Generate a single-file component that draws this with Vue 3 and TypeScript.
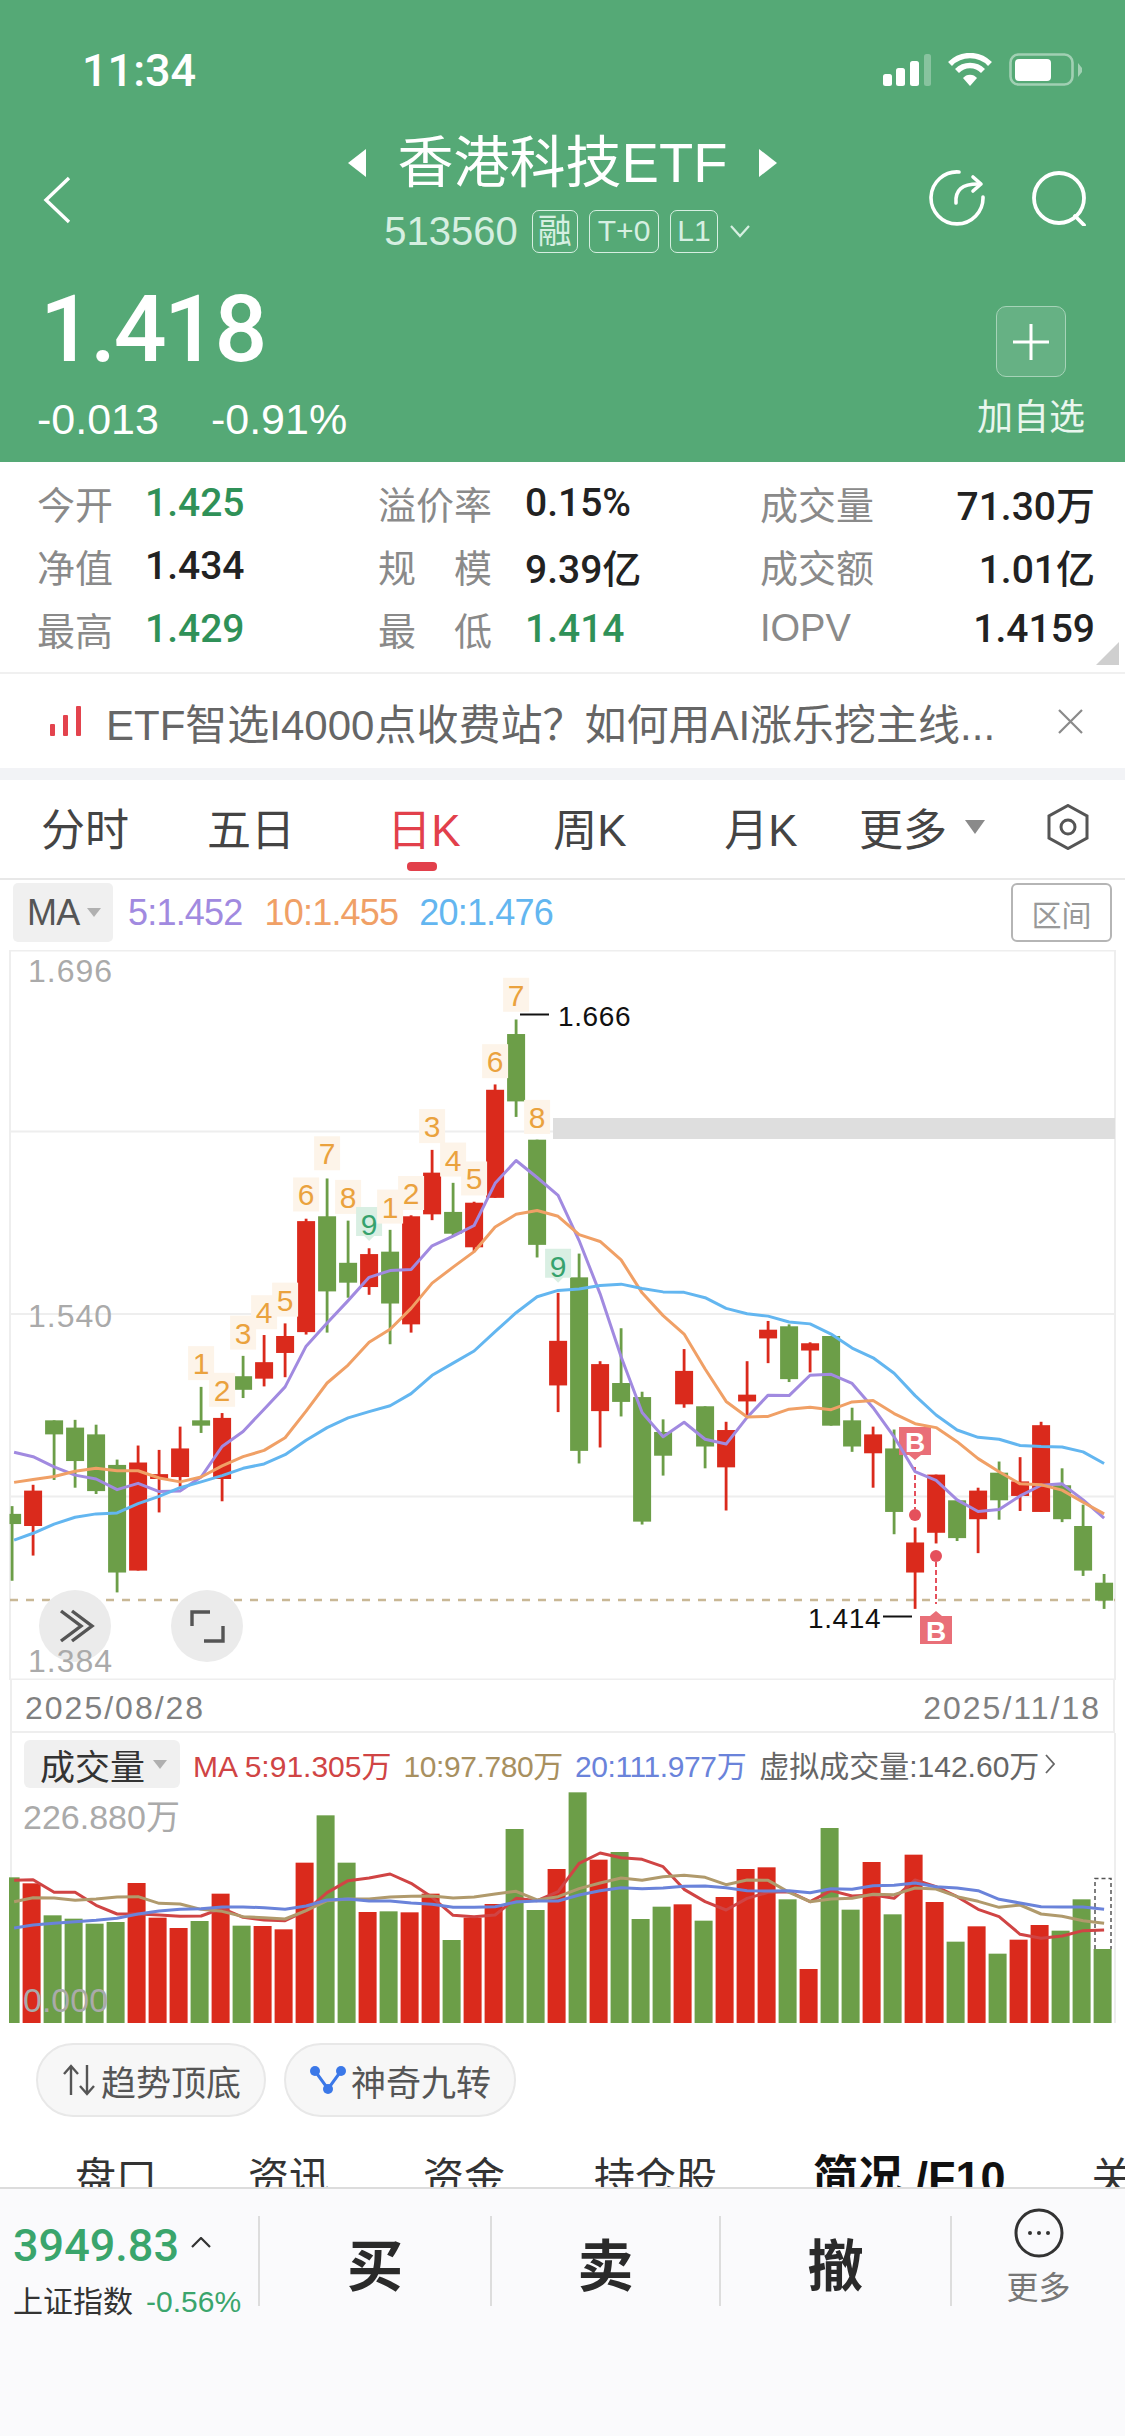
<template>
  <div class="page">
    <header class="top">
      <div class="status">
        <span class="clock">11:34</span>
        <div class="status-icons">
          <svg width="50" height="34" viewBox="0 0 50 34">
            <rect x="2" y="21" width="9" height="12" rx="2.5" fill="#fff" />
            <rect x="15" y="15" width="9" height="18" rx="2.5" fill="#fff" />
            <rect x="29" y="8" width="9" height="25" rx="2.5" fill="#fff" />
            <rect x="43" y="1" width="7" height="32" rx="2.5" fill="#fff" opacity="0.3" />
          </svg>
          <svg width="46" height="34" viewBox="0 0 46 34">
            <path d="M3 11 A28 28 0 0 1 43 11" fill="none" stroke="#fff" stroke-width="5.5" />
            <path d="M10 18 A18 18 0 0 1 36 18" fill="none" stroke="#fff" stroke-width="5.5" />
            <path d="M16 25 L23 33 L30 25 A9 9 0 0 0 16 25 Z" fill="#fff" />
          </svg>
          <svg width="73" height="34" viewBox="0 0 73 34">
            <rect x="1.5" y="1.5" width="62" height="30" rx="8" fill="none" stroke="#fff" stroke-width="2.6" opacity="0.45" />
            <rect x="6" y="6" width="36" height="22" rx="4" fill="#fff" />
            <path d="M69 10 L73 15 V19 L69 24 Z" fill="#fff" opacity="0.45" />
          </svg>
        </div>
      </div>

      <div class="nav">
        <svg class="back" width="28" height="48" viewBox="0 0 28 48">
          <path d="M26 2 L3 24 L26 46" fill="none" stroke="#fff" stroke-width="3.4" />
        </svg>
        <div class="stock">
          <div class="stock-name">
            <svg width="18" height="28" viewBox="0 0 18 28"><path d="M18 0 V28 L0 14 Z" fill="#fff" /></svg>
            <span>香港科技ETF</span>
            <svg width="18" height="28" viewBox="0 0 18 28"><path d="M0 0 V28 L18 14 Z" fill="#fff" /></svg>
          </div>
          <div class="stock-code">
            <span class="code">513560</span>
            <span class="badge rong">融</span>
            <span class="badge wide">T+0</span>
            <span class="badge">L1</span>
            <svg class="code-more" width="20" height="13" viewBox="0 0 20 13">
              <path d="M1 1 L10 11 L19 1" fill="none" stroke="#d6efe1" stroke-width="2.2" />
            </svg>
          </div>
        </div>
        <div class="nav-actions">
          <svg width="56" height="56" viewBox="0 0 56 56" fill="none" stroke="#fff" stroke-width="3.6" stroke-linecap="round" stroke-linejoin="round">
            <path d="M30 2 A26 26 0 1 0 54 27" />
            <path d="M27 33 C26 20 33 14 49 14" />
            <path d="M44 7 L52 14 L44 21" />
          </svg>
          <svg width="56" height="56" viewBox="0 0 56 56" fill="none" stroke="#fff" stroke-width="3.8" stroke-linecap="round">
            <circle cx="28" cy="28" r="25" />
            <path d="M44 46 L53 55" />
          </svg>
        </div>
      </div>

      <div class="quote">
        <div>
          <div class="price">1.418</div>
          <div class="change"><span>-0.013</span><span>-0.91%</span></div>
        </div>
        <div class="watch">
          <div class="watch-btn">
            <svg width="38" height="38" viewBox="0 0 38 38">
              <path d="M19 1 V37 M1 19 H37" stroke="#fff" stroke-width="3" />
            </svg>
          </div>
          <span>加自选</span>
        </div>
      </div>
    </header>

    <section class="stats">
      <div v-for="(cell, i) in stats" :key="i" class="stat" :class="`col-${i % 3}`">
        <span class="stat-label">{{ cell.label }}</span>
        <span class="stat-value" :class="{ green: cell.green }">{{ cell.value }}</span>
      </div>
      <span class="corner"></span>
    </section>

    <section class="news">
      <svg width="32" height="30" viewBox="0 0 32 30">
        <rect x="0" y="18" width="5" height="12" rx="1" fill="#e3434d" />
        <rect x="13" y="9" width="5" height="21" rx="1" fill="#e3434d" />
        <rect x="26" y="0" width="5" height="30" rx="1" fill="#e3434d" />
      </svg>
      <span class="news-text">ETF智选I4000点收费站？如何用AI涨乐挖主线...</span>
      <svg width="25" height="25" viewBox="0 0 25 25">
        <path d="M1 1 L24 24 M24 1 L1 24" stroke="#8a8a8a" stroke-width="2.2" />
      </svg>
    </section>

    <nav class="tabs">
      <span v-for="tab in tabs" :key="tab" class="tab" :class="{ active: tab === '日K' }">{{ tab }}</span>
      <span class="tab-more">更多<i class="caret"></i></span>
      <svg class="hex" width="44" height="46" viewBox="0 0 44 46">
        <path d="M22 1.5 L41 12 V34 L22 44.5 L3 34 V12 Z" fill="none" stroke="#555" stroke-width="3" />
        <circle cx="22" cy="23" r="7" fill="none" stroke="#555" stroke-width="3" />
      </svg>
    </nav>

    <div class="ma-row">
      <span class="ma-chip">MA<i class="caret small"></i></span>
      <span class="ma5">5:1.452</span>
      <span class="ma10">10:1.455</span>
      <span class="ma20">20:1.476</span>
      <span class="range-btn">区间</span>
    </div>

    <div class="kline">
      <svg width="1125" height="730" viewBox="0 950 1125 730">
        <path d="M10 950 V1680 M1115 950 V1680 M10 950.5 H1115 M10 1131.5 H1115 M10 1314 H1115 M10 1496.5 H1115 M10 1679.5 H1115" stroke="#eeeeee" stroke-width="2" fill="none" />
        <rect x="553" y="1118" width="562" height="21" fill="#dedede" />
        <path d="M10 1600 H1115" stroke="#c9b896" stroke-width="2.4" stroke-dasharray="8 8" />

        <g v-for="(c, i) in candles" :key="i" :fill="c[0] ? RED : GREEN">
          <rect :x="kX(i) - 1.4" :y="kY(c[3])" width="2.8" :height="kY(c[4]) - kY(c[3])" />
          <rect :x="Math.max(kX(i) - 9, 9.5)" :y="kY(c[1])" :width="kX(i) + 9 - Math.max(kX(i) - 9, 9.5)" :height="kY(c[2]) - kY(c[1])" />
        </g>

        <g v-for="(t, i) in tags" :key="`t${i}`">
          <template v-if="t[0] === 9">
            <path :d="nineShape(kX(t[1]), kY(t[2]))" fill="#d9efe3" />
            <text :x="kX(t[1])" :y="kY(t[2]) + 11" class="tag nine">9</text>
          </template>
          <template v-else>
            <rect :x="kX(t[1]) - 13" :y="kY(t[2]) - 17" width="26" height="34" fill="#fdf4e9" />
            <text :x="kX(t[1])" :y="kY(t[2]) + 11" class="tag">{{ t[0] }}</text>
          </template>
        </g>

        <path d="M899 1427 H931 V1455 H921 L915 1460 L909 1455 H899 Z" fill="#e96f78" />
        <text x="915" y="1452" class="buy">B</text>
        <path d="M915 1467 V1509" stroke="#e5505c" stroke-width="2" stroke-dasharray="5 3" />
        <circle cx="915" cy="1515" r="6" fill="#e5505c" />
        <path d="M936 1562 V1604" stroke="#e5505c" stroke-width="2" stroke-dasharray="5 3" />
        <circle cx="936" cy="1556" r="6" fill="#e5505c" />
        <path d="M920 1616 H930 L936 1611 L942 1616 H952 V1644 H920 Z" fill="#e96f78" />
        <text x="936" y="1641" class="buy">B</text>

        <path :d="linePath(ma5, kX, kY)" class="line" stroke="#a18ae0" />
        <path :d="linePath(ma10, kX, kY)" class="line" stroke="#f0a066" />
        <path :d="linePath(ma20, kX, kY)" class="line" stroke="#63b6f0" />

        <path d="M520 1014.5 H549" stroke="#111" stroke-width="2" />
        <text x="558" y="1026" class="peak">1.666</text>
        <path d="M883 1616.5 H912" stroke="#111" stroke-width="2" />
        <text x="808" y="1628" class="peak">1.414</text>

        <circle cx="75" cy="1626" r="36" fill="#ebebeb" />
        <path d="M61 1611 L81 1626 L61 1641 M72 1611 L92 1626 L72 1641" fill="none" stroke="#555" stroke-width="3.4" />
        <circle cx="207" cy="1626" r="36" fill="#ebebeb" />
        <path d="M192 1626 V1612 H210 M223 1626 V1641 H204" fill="none" stroke="#555" stroke-width="3.4" />

        <text x="28" y="982" class="axis">1.696</text>
        <text x="28" y="1327" class="axis">1.540</text>
        <text x="28" y="1672" class="axis">1.384</text>
      </svg>
    </div>

    <div class="dates"><span>2025/08/28</span><span>2025/11/18</span></div>

    <div class="vol-panel">
      <div class="vol-legend">
        <span class="vol-chip">成交量<i class="caret small"></i></span>
        <span class="vol-ma vm5">MA 5:91.305万</span>
        <span class="vol-ma vm10">10:97.780万</span>
        <span class="vol-ma vm20">20:111.977万</span>
        <span class="vol-virtual">虚拟成交量:142.60万</span>
        <svg width="10" height="20" viewBox="0 0 10 20">
          <path d="M1 1 L9 10 L1 19" fill="none" stroke="#666" stroke-width="1.8" />
        </svg>
      </div>
      <svg class="vol-chart" width="1125" height="233" viewBox="0 1790 1125 233">
        <rect v-for="(b, i) in volumes" :key="i"
          :x="Math.max(vX(i) - 9, 9)" :y="vY(b[1])"
          :width="vX(i) + 9 - Math.max(vX(i) - 9, 9)" :height="2023 - vY(b[1])"
          :fill="b[0] ? RED : GREEN" />
        <path d="M1095 1949 V1878.5 H1111 V1949" fill="none" stroke="#555" stroke-width="1.5" stroke-dasharray="4 3" />
        <path :d="linePath(volMa5, kX, vY)" class="line" stroke="#d04444" />
        <path :d="linePath(volMa10, kX, vY)" class="line" stroke="#b09a6c" />
        <path :d="linePath(volMa20, kX, vY)" class="line" stroke="#6a83da" />
        <text x="23" y="1829" class="axis big">226.880万</text>
        <text x="23" y="2012" class="axis big">0.000</text>
      </svg>
    </div>

    <div class="extras">
      <div class="pills">
        <span class="pill">
          <svg width="34" height="32" viewBox="0 0 34 32">
            <path d="M9 31 V3 M2 10 L9 2 L16 10 M25 1 V29 M18 22 L25 30 L32 22" fill="none" stroke="#555" stroke-width="2.4" />
          </svg>
          趋势顶底
        </span>
        <span class="pill">
          <svg width="36" height="30" viewBox="0 0 36 30">
            <path d="M5 6 L18 24 L31 6" fill="none" stroke="#3b78e8" stroke-width="3" />
            <circle cx="5" cy="6" r="5" fill="#3b78e8" />
            <circle cx="31" cy="6" r="5" fill="#3b78e8" />
            <circle cx="18" cy="24" r="5" fill="#3b78e8" />
          </svg>
          神奇九转
        </span>
      </div>
      <div class="sections">
        <span style="margin-left: 75px">盘口</span>
        <span style="margin-left: 91px">资讯</span>
        <span style="margin-left: 93px">资金</span>
        <span style="margin-left: 89px">持仓股</span>
        <span class="current" style="margin-left: 96px">简况 /F10</span>
        <span style="margin-left: 86px">关联</span>
      </div>
    </div>

    <footer class="footer">
      <div class="index">
        <div class="index-top">
          <span class="index-value">3949.83</span>
          <svg width="20" height="11" viewBox="0 0 20 11">
            <path d="M1 10 L10 1 L19 10" fill="none" stroke="#333" stroke-width="2.2" />
          </svg>
        </div>
        <div class="index-bottom"><span>上证指数</span><span class="index-pct">-0.56%</span></div>
      </div>
      <div class="trade">买</div>
      <div class="trade">卖</div>
      <div class="trade">撤</div>
      <div class="more">
        <svg width="50" height="50" viewBox="0 0 50 50">
          <circle cx="25" cy="25" r="23" fill="none" stroke="#333" stroke-width="3" />
          <circle cx="16" cy="25" r="2" fill="#333" />
          <circle cx="25" cy="25" r="2" fill="#333" />
          <circle cx="34" cy="25" r="2" fill="#333" />
        </svg>
        <span>更多</span>
      </div>
    </footer>
  </div>
</template>

<script setup lang="ts">
type Candle = [number, number, number, number, number]

const RED = '#da2a1c'
const GREEN = '#6c9e48'

const stats = [
  { label: '今开', value: '1.425', green: true },
  { label: '溢价率', value: '0.15%' },
  { label: '成交量', value: '71.30万' },
  { label: '净值', value: '1.434' },
  { label: '规 模', value: '9.39亿' },
  { label: '成交额', value: '1.01亿' },
  { label: '最高', value: '1.429', green: true },
  { label: '最 低', value: '1.414', green: true },
  { label: 'IOPV', value: '1.4159' }
]

const tabs = ['分时', '五日', '日K', '周K', '月K']

const kX = (i: number) => 12.1 + 21 * i
const kY = (v: number) => 940 + (v * 760) / 1568
const vX = (i: number) => 10.6 + 21 * i
const vY = (v: number) => 1700 + v / 3

// up, body top, body bottom, wick top, wick bottom
const candles: Candle[] = [
  [0, 1184, 1205, 1168, 1322], [1, 1136, 1209, 1124, 1270], [0, 991, 1020, 991, 1114],
  [0, 1006, 1075, 990, 1130], [0, 1020, 1137, 1000, 1143], [0, 1083, 1305, 1072, 1346],
  [1, 1078, 1301, 1043, 1301], [1, 1102, 1112, 1052, 1181], [1, 1049, 1108, 1004, 1128],
  [0, 991, 1002, 922, 1017], [1, 986, 1112, 976, 1158], [0, 900, 928, 858, 945],
  [1, 871, 905, 815, 921], [1, 817, 852, 791, 902], [1, 580, 809, 575, 814],
  [0, 570, 725, 492, 810], [0, 666, 707, 579, 738], [1, 648, 716, 636, 732],
  [0, 643, 750, 598, 834], [1, 570, 793, 568, 810], [1, 480, 566, 433, 578],
  [0, 561, 606, 501, 612], [1, 542, 634, 540, 642], [1, 309, 532, 298, 532],
  [0, 194, 333, 164, 365], [0, 412, 629, 412, 655], [1, 827, 919, 728, 974],
  [0, 696, 1054, 647, 1080], [1, 875, 972, 869, 1047], [0, 914, 953, 801, 983],
  [0, 943, 1200, 932, 1206], [0, 1015, 1064, 989, 1105], [1, 889, 958, 844, 965],
  [0, 962, 1045, 962, 1090], [1, 1011, 1088, 994, 1177], [1, 938, 952, 869, 980],
  [1, 804, 822, 786, 873], [0, 797, 906, 793, 912], [1, 832, 847, 830, 892],
  [0, 817, 1002, 817, 1002], [0, 991, 1045, 965, 1056], [1, 1020, 1059, 1004, 1130],
  [0, 1049, 1180, 1010, 1226], [1, 1243, 1305, 1212, 1380], [1, 1103, 1223, 1103, 1245],
  [0, 1156, 1234, 1156, 1240], [1, 1136, 1195, 1130, 1265], [0, 1099, 1156, 1076, 1196],
  [1, 1117, 1147, 1067, 1178], [1, 1001, 1180, 994, 1180], [0, 1125, 1195, 1090, 1201],
  [0, 1209, 1301, 1165, 1312], [0, 1326, 1363, 1308, 1380]
]

const ma5 = [
  1057, 1066, 1087, 1104, 1112, 1134, 1121, 1138, 1137, 1108, 1045, 1014, 968, 922, 838, 790, 744, 696, 682, 680,
  631, 611, 589, 502, 455, 490, 527, 620, 730, 860, 975, 1025, 995, 1030, 1040, 985, 939, 940, 898, 896, 915, 965,
  1025, 1097, 1115, 1155, 1179, 1175, 1147, 1125, 1122, 1155, 1193
]
const ma10 = [
  1119, 1113, 1107, 1096, 1090, 1095, 1095, 1110, 1118, 1108, 1085, 1066, 1053, 1027, 972, 914, 877, 830, 803, 760,
  708, 675, 643, 592, 566, 558, 570, 608, 622, 660, 728, 775, 813, 885, 952, 984, 983, 968, 964, 969, 953, 950,
  977, 998, 1006, 1035, 1070, 1097, 1122, 1124, 1135, 1160, 1184
]
const ma20 = [
  1238, 1224, 1205, 1191, 1184, 1182, 1163, 1148, 1130, 1118, 1105, 1090, 1081, 1062, 1032, 1006, 986, 973, 961, 936,
  898, 873, 848, 808, 769, 736, 723, 720, 713, 710, 719, 726, 727, 738, 760, 771, 776, 788, 792, 813, 842, 862,
  894, 940, 980, 1011, 1026, 1030, 1043, 1045, 1046, 1056, 1080
]

// value, candle index, centre
const tags: [number, number, number][] = [
  [1, 9, 873], [2, 10, 928], [3, 11, 810], [4, 12, 768], [5, 13, 742], [6, 14, 525], [7, 15, 440], [8, 16, 530],
  [9, 17, 586], [1, 18, 550], [2, 19, 522], [3, 20, 384], [4, 21, 453], [5, 22, 492], [6, 23, 250], [7, 24, 113],
  [8, 25, 365], [9, 26, 672]
]

const volTops = [
  532, 550, 646, 656, 671, 666, 549, 653, 684, 663, 581, 677, 678, 688, 488, 346, 488, 636, 634, 637, 581, 720, 653,
  612, 387, 630, 507, 277, 479, 456, 657, 620, 613, 662, 591, 507, 502, 598, 807, 384, 629, 486, 643, 464, 606, 725,
  679, 761, 719, 675, 692, 598, 747
]
const volumes = volTops.map((top, i): [boolean, number] => [candles[i][0] === 1, top])

const volMa5 = [
  541, 539, 577, 577, 616, 642, 642, 645, 649, 648, 625, 652, 660, 662, 632, 578, 542, 534, 522, 550, 592, 646, 650,
  645, 595, 602, 575, 490, 459, 473, 478, 500, 568, 605, 630, 595, 577, 575, 605, 572, 588, 585, 595, 540, 560, 590,
  628, 650, 703, 715, 708, 692, 690
]
const volMa10 = [
  605, 593, 594, 601, 597, 591, 590, 610, 612, 628, 634, 650, 653, 657, 632, 602, 597, 597, 591, 589, 588, 594, 591,
  582, 574, 600, 590, 566, 549, 534, 541, 530, 526, 532, 554, 540, 541, 577, 605, 597, 595, 583, 584, 564, 567, 590,
  604, 622, 615, 642, 649, 662, 670
]
const volMa20 = [
  684, 675, 670, 665, 661, 655, 642, 633, 628, 626, 621, 621, 623, 628, 618, 600, 597, 603, 603, 609, 613, 622, 622,
  620, 606, 603, 603, 585, 572, 563, 566, 564, 559, 558, 563, 572, 573, 572, 578, 566, 568, 557, 556, 549, 560, 564,
  572, 598, 609, 620, 621, 621, 628
]

function linePath(values: number[], toX: (i: number) => number, toY: (v: number) => number) {
  return values.map((v, i) => `${i ? 'L' : 'M'}${toX(i) + (i ? 0 : 2)} ${toY(v)}`).join(' ')
}

function nineShape(x: number, y: number) {
  return `M${x - 13} ${y - 17} H${x + 13} V${y + 12} H${x + 5} L${x} ${y + 17} L${x - 5} ${y + 12} H${x - 13} Z`
}
</script>

<style>
html,
body {
  margin: 0;
  background: #fff;
}
</style>

<style scoped>
.page {
  width: 1125px;
  height: 2436px;
  overflow: hidden;
  display: flex;
  flex-direction: column;
  background: #fff;
  font-family: 'Liberation Sans', 'Noto Sans CJK SC', sans-serif;
  color: #333;
}

.top {
  height: 462px;
  flex: none;
  background: #55a976;
  color: #fff;
  box-sizing: border-box;
  padding-top: 46px;
}

.status {
  height: 48px;
  display: flex;
  align-items: center;
  justify-content: space-between;
  padding: 0 43px 0 82px;
}

.clock {
  font-size: 45px;
  font-weight: 500;
  font-family: Roboto, 'Liberation Sans', sans-serif;
}

.status-icons {
  display: flex;
  align-items: center;
  gap: 16px;
}

.nav {
  margin-top: 41px;
  display: grid;
  grid-template-columns: 1fr auto 1fr;
  height: 118px;
}

.back {
  margin: 41px 0 0 43px;
}

.stock {
  display: flex;
  flex-direction: column;
  align-items: center;
}

.stock-name {
  display: flex;
  align-items: center;
  gap: 32px;
  height: 56px;
  font-size: 56px;
  line-height: 56px;
}

.stock-code {
  margin-top: 17px;
  padding-left: 9px;
  display: flex;
  align-items: center;
  gap: 11px;
  color: #d6efe1;
  height: 46px;
}

.code {
  font-size: 40px;
  margin-right: 3px;
}

.badge {
  border: 1.5px solid #d6efe1;
  border-radius: 7px;
  height: 43px;
  box-sizing: border-box;
  padding: 0 6px;
  display: flex;
  align-items: center;
  font-size: 30px;
  line-height: 1;
}

.badge.wide {
  padding: 0 8px;
}

.rong {
  padding: 0 5px;
  font-size: 34px;
}

.code-more {
  margin-left: 1px;
}

.nav-actions {
  display: flex;
  justify-content: flex-end;
  align-items: flex-start;
  gap: 46px;
  padding: 35px 38px 0 0;
}

.quote {
  margin-top: 43px;
  display: flex;
  justify-content: space-between;
  padding: 0 40px 0 37px;
}

.price {
  font-size: 93px;
  line-height: 67px;
  height: 67px;
  padding: 0 0 0 3px;
  font-weight: 500;
  letter-spacing: -2.5px;
  font-family: Roboto, 'Liberation Sans', sans-serif;
}

.change {
  margin-top: 36px;
  display: flex;
  gap: 52px;
  font-size: 43px;
  line-height: 40px;
}

.watch {
  margin-top: 10px;
  display: flex;
  flex-direction: column;
  align-items: center;
  gap: 21px;
  font-size: 36px;
  line-height: 40px;
  color: #e9f6ee;
}

.watch-btn {
  width: 70px;
  height: 71px;
  box-sizing: border-box;
  border: 1.5px solid #a6d3b8;
  border-radius: 10px;
  background: rgba(255, 255, 255, 0.1);
  display: flex;
  align-items: center;
  justify-content: center;
}

.stats {
  position: relative;
  height: 212px;
  flex: none;
  box-sizing: border-box;
  padding: 9px 30px 0 37px;
  display: grid;
  grid-template-columns: 341px 382px 1fr;
  grid-auto-rows: 63px;
  border-bottom: 2px solid #f0f0f0;
}

.stat {
  display: flex;
  align-items: center;
}

.stat-label {
  font-size: 38px;
  color: #8a8a8a;
  flex: none;
  white-space: nowrap;
}

.col-0 .stat-label {
  width: 108px;
}

.col-1 .stat-label {
  width: 114px;
  margin-right: 33px;
  text-align-last: justify;
}

.col-2 .stat-value {
  margin-left: auto;
}

.stat-value {
  font-size: 39px;
  font-weight: 500;
  color: #222;
  font-family: Roboto, 'Liberation Sans', 'Noto Sans CJK SC', sans-serif;
}

.stat-value.green {
  color: #2f9158;
}

.corner {
  position: absolute;
  right: 6px;
  bottom: 7px;
  width: 0;
  height: 0;
  border-left: 23px solid transparent;
  border-bottom: 23px solid #cfcfcf;
}

.news {
  height: 94px;
  flex: none;
  display: flex;
  align-items: center;
  padding: 0 42px 0 50px;
  background: #fff;
}

.news-text {
  flex: 1;
  margin-left: 24px;
  font-size: 42px;
  color: #666;
  white-space: nowrap;
}

.tabs {
  position: relative;
  height: 112px;
  flex: none;
  box-sizing: border-box;
  border-top: 12px solid #f2f3f6;
  border-bottom: 2px solid #e8e8e8;
  padding-bottom: 4px;
  display: grid;
  grid-template-columns: 170px 162px 184px 148px 194px auto 1fr;
  align-items: center;
  font-size: 44px;
  color: #444;
}

.tab {
  position: relative;
  text-align: center;
}

.tab.active {
  color: #e2404b;
}

.tab.active::after {
  content: '';
  position: absolute;
  left: 50%;
  top: 67px;
  width: 30px;
  height: 9px;
  margin-left: -17px;
  border-radius: 4px;
  background: #e2404b;
}

.tab-more {
  display: flex;
  align-items: center;
  margin-left: 1px;
}

.caret {
  display: inline-block;
  width: 0;
  height: 0;
  margin-left: 18px;
  border-left: 10px solid transparent;
  border-right: 10px solid transparent;
  border-top: 14px solid #8a8a8a;
}

.caret.small {
  margin-left: 8px;
  border-left-width: 7px;
  border-right-width: 7px;
  border-top-width: 9px;
  border-top-color: #b0b0b0;
}

.hex {
  justify-self: end;
  margin-right: 35px;
}

.ma-row {
  height: 70px;
  flex: none;
  box-sizing: border-box;
  padding: 3px 13px 8px 13px;
  display: flex;
  align-items: center;
  font-size: 36px;
}

.ma-chip {
  width: 100px;
  height: 59px;
  box-sizing: border-box;
  padding-left: 14px;
  background: #f0f0f0;
  border-radius: 5px;
  display: flex;
  align-items: center;
  color: #555;
  margin-right: 15px;
  letter-spacing: -0.8px;
}

.ma5,
.ma10,
.ma20 {
  letter-spacing: -0.8px;
}

.ma5 {
  color: #a18ae0;
}

.ma10 {
  margin-left: 22px;
  color: #f0a066;
}

.ma20 {
  margin-left: 21px;
  color: #63b6f0;
}

.range-btn {
  margin-left: auto;
  width: 101px;
  height: 59px;
  box-sizing: border-box;
  border: 2px solid #b5b5b5;
  border-radius: 6px;
  font-size: 30px;
  color: #999;
  display: flex;
  align-items: center;
  justify-content: center;
}

.kline {
  height: 730px;
  flex: none;
}

.kline svg,
.vol-chart {
  display: block;
}

.line {
  fill: none;
  stroke-width: 3;
  stroke-linejoin: round;
}

.tag {
  font-size: 30px;
  text-anchor: middle;
  fill: #eaa23e;
  font-family: 'Liberation Sans', sans-serif;
}

.tag.nine {
  fill: #36a26d;
}

.buy {
  font-size: 28px;
  font-weight: 700;
  fill: #fff;
  text-anchor: middle;
}

.axis {
  font-size: 32px;
  letter-spacing: 1px;
  fill: #aaaaaa;
}

.axis.big {
  letter-spacing: 0;
  font-size: 34px;
}

.peak {
  font-size: 28px;
  letter-spacing: 0.6px;
  fill: #111;
}

.dates {
  height: 53px;
  flex: none;
  box-sizing: border-box;
  margin: 0 10px;
  padding: 8px 12px 0 13px;
  border: 2px solid #eeeeee;
  border-width: 0 2px 2px 2px;
  display: flex;
  justify-content: space-between;
  font-size: 32px;
  line-height: 40px;
  letter-spacing: 2px;
  color: #808080;
}

.vol-panel {
  height: 290px;
  flex: none;
  display: flex;
  flex-direction: column;
  background: linear-gradient(#eee, #eee) 10px 0 / 2px 100% no-repeat, linear-gradient(#eee, #eee) 1114px 0 / 2px 100% no-repeat;
}

.vol-legend {
  height: 57px;
  flex: none;
  box-sizing: border-box;
  padding: 7px 0 2px 24px;
  display: flex;
  align-items: center;
}

.vol-chip {
  width: 156px;
  height: 48px;
  box-sizing: border-box;
  padding-left: 16px;
  background: #f0f0f0;
  border-radius: 6px;
  display: flex;
  align-items: center;
  font-size: 35px;
  color: #333;
  margin-right: 13px;
}

.vol-ma {
  font-size: 30px;
}

.vm5 {
  color: #d04444;
}

.vm10 {
  margin-left: 12px;
  letter-spacing: -0.4px;
  color: #a8905f;
}

.vm20 {
  margin-left: 12px;
  letter-spacing: -0.4px;
  color: #6a83da;
}

.vol-virtual {
  margin: 0 6px 0 13px;
  font-size: 30px;
  color: #666;
}

.extras {
  flex: 1;
  overflow: hidden;
  min-height: 0;
}

.pills {
  display: flex;
  gap: 18px;
  padding: 20px 0 0 36px;
}

.pill {
  height: 74px;
  box-sizing: border-box;
  padding: 0 23px 0 24px;
  display: flex;
  align-items: center;
  gap: 5px;
  background: #f7f7f7;
  border: 2px solid #e8e8e8;
  border-radius: 37px;
  font-size: 35px;
  color: #555;
  white-space: nowrap;
}

.sections {
  margin-top: 37px;
  display: flex;
  align-items: flex-start;
  font-size: 41px;
  line-height: 48px;
  color: #333;
  white-space: nowrap;
}

.current {
  color: #111;
  font-size: 45px;
  font-weight: 700;
}

.footer {
  height: 249px;
  flex: none;
  box-sizing: border-box;
  border-top: 2px solid #dcdcdc;
  background: #fafafc;
  padding-top: 27px;
  display: grid;
  grid-template-columns: 258px 232px 229px 231px 1fr;
  grid-auto-rows: 90px;
}

.index {
  padding: 11px 0 0 13px;
  box-sizing: border-box;
}

.index-top {
  display: flex;
  align-items: flex-start;
  gap: 12px;
}

.index-top svg {
  margin-top: 10px;
}

.index-value {
  font-size: 45px;
  line-height: 38px;
  font-weight: 500;
  color: #3aa56c;
  font-family: Roboto, 'Liberation Sans', sans-serif;
}

.index-bottom {
  margin-top: 20px;
  display: flex;
  gap: 13px;
  font-size: 30px;
  line-height: 34px;
  color: #333;
}

.index-pct {
  color: #3aa56c;
}

.trade {
  border-left: 2px solid #dddddd;
  display: flex;
  align-items: center;
  justify-content: center;
  font-size: 56px;
  font-weight: 700;
  color: #2a2a2a;
}

.more {
  border-left: 2px solid #dddddd;
  display: flex;
  flex-direction: column;
  align-items: center;
  font-size: 32px;
  color: #777;
}

.more svg {
  margin-top: -8px;
}

.more span {
  margin-top: 12px;
  line-height: 36px;
}
</style>
